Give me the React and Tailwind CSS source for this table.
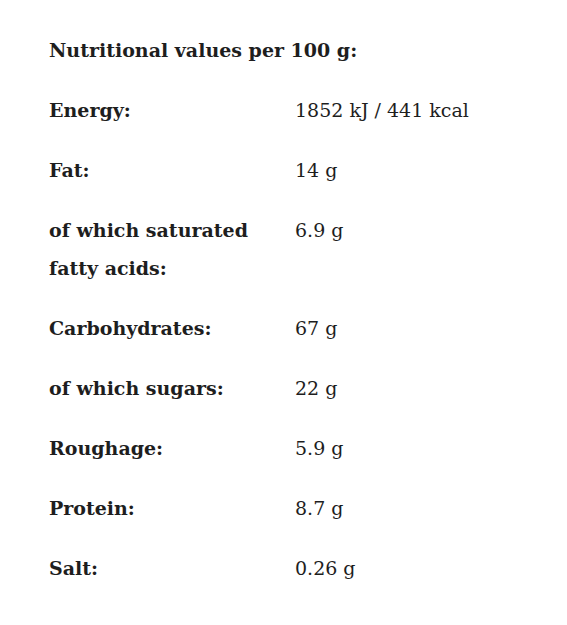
const rows = [
  ["Energy:", "1852 kJ / 441 kcal"],
  ["Fat:", "14 g"],
  ["of which saturated fatty acids:", "6.9 g"],
  ["Carbohydrates:", "67 g"],
  ["of which sugars:", "22 g"],
  ["Roughage:", "5.9 g"],
  ["Protein:", "8.7 g"],
  ["Salt:", "0.26 g"],
];

export default function App() {
  return (
    <div className="min-h-[625px] bg-white px-[49px] pt-[31px] text-[#1e1e1e] font-['DejaVu_Serif',serif]">
      <h2 className="text-[19px] font-bold leading-[38px] mb-[22px]">
        Nutritional values per 100 g:
      </h2>
      <div className="flex flex-col gap-[22px]">
        {rows.map(([label, value]) => (
          <div key={label} className="flex leading-[38px]">
            <div className="w-[246px] pr-[36px] text-[19px] font-bold">{label}</div>
            <div className="text-[19px]">{value}</div>
          </div>
        ))}
      </div>
    </div>
  );
}
